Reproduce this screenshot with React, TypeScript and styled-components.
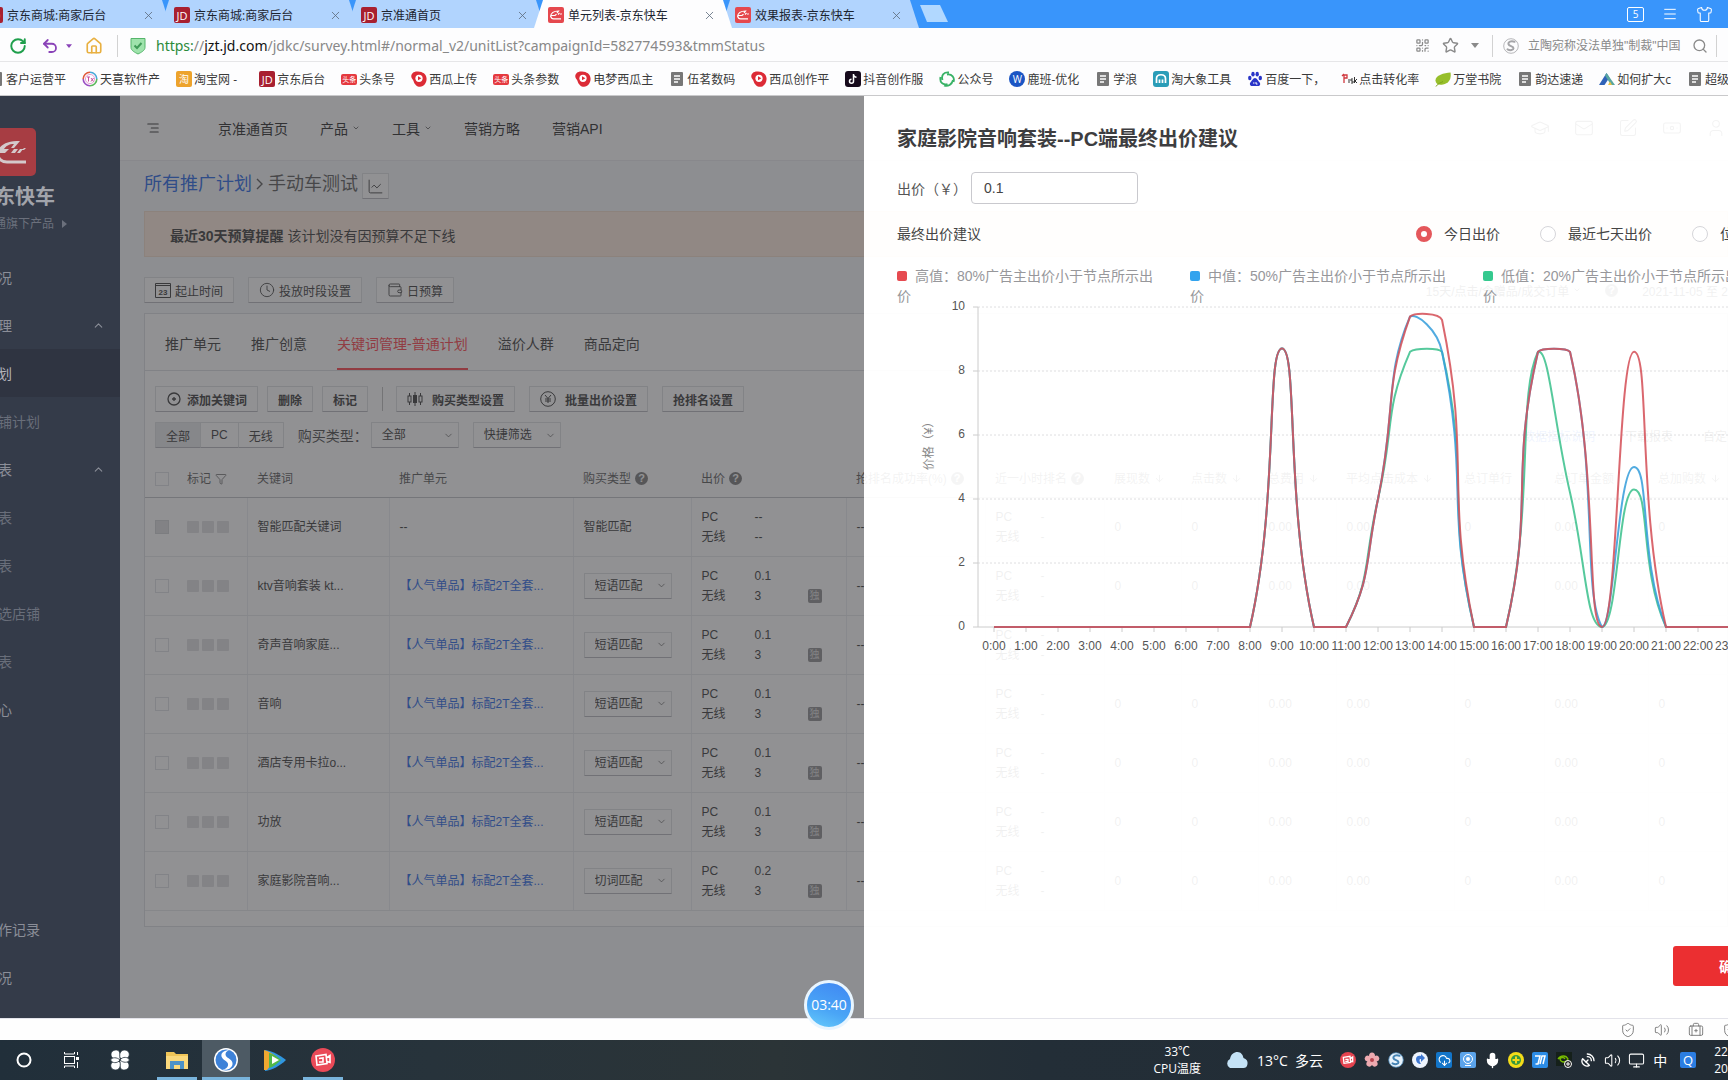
import React from "react";
import styled, { createGlobalStyle, css } from "styled-components";
import {
  AlignRight, ArrowDown, ChevronDown, ChevronUp, Clock, Filter, GraduationCap, House, LineChart, Mail, Menu, Mic,
  Monitor, QrCode, RotateCw, Search, Shirt, ShieldCheck, SquarePen, Star, Undo2, User, Volume2, Wallet, X, Banknote,
  BriefcaseMedical, CloudDownload, SatelliteDish,
} from "lucide-react";

const GlobalStyle = createGlobalStyle`
  * { box-sizing: border-box; }
  body { margin: 0; overflow: hidden; background: #fff; }
  body, button, input, select { font-family: "Liberation Sans", "Noto Sans CJK SC", sans-serif; }
  button { cursor: pointer; }
`;

const UI_FONT = '"Open Sans", "Noto Sans CJK SC", sans-serif';

/* ---------- browser chrome ---------- */

const Screen = styled.div`
  display: flex;
  flex-direction: column;
  min-height: 100vh;
  overflow: hidden;
  font-size: 12px;
  color: #333;
`;

const TabStrip = styled.div`
  display: flex;
  align-items: stretch;
  height: 28px;
  background: #3995fb;
  font-family: ${UI_FONT};
`;

const TabList = styled.div`
  display: flex;
  margin-left: -27px;
`;

const BrowserTab = styled.div<{ $active?: boolean }>`
  display: flex;
  align-items: center;
  gap: 4px;
  width: 198px;
  margin-right: -11px;
  padding: 2px 16px 0 14px;
  background: ${(p) => (p.$active ? "#fdfdfe" : "#b1d4fe")};
  clip-path: polygon(9px 0, calc(100% - 9px) 0, 100% 100%, 0 100%);
  color: #1c2430;
  white-space: nowrap;
  position: relative;
  z-index: ${(p) => (p.$active ? 1 : 0)};
`;

const CloseTab = styled.button`
  display: flex;
  margin-left: auto;
  padding: 0;
  border: 0;
  background: none;
  color: #5d6b7c;
`;

const NewTab = styled.button`
  width: 28px;
  height: 17px;
  margin: 5px 0 0 12px;
  border: 0;
  padding: 0;
  background: #b1d8ff;
  clip-path: polygon(0 0, 20px 0, 100% 100%, 7px 100%);
`;

const WindowTools = styled.div`
  display: flex;
  align-items: center;
  gap: 18px;
  margin-left: auto;
  padding-right: 15px;
  color: #fff;
`;

const SquareCount = styled.span`
  width: 17px;
  height: 15px;
  border: 1px solid #fff;
  border-radius: 2px;
  font-size: 10px;
  line-height: 13px;
  text-align: center;
`;

const AddressBar = styled.div`
  display: flex;
  align-items: center;
  height: 34px;
  padding: 2px 11px 0 2px;
  border-bottom: 1px solid #e6e6e8;
  background: #fdfdfe;
  color: #858585;
`;

const ToolButton = styled.button<{ $w: number; $c?: string }>`
  display: flex;
  align-items: center;
  justify-content: center;
  flex: 0 0 ${(p) => p.$w}px;
  padding: 0;
  border: 0;
  background: none;
  color: ${(p) => p.$c || "#8a8a8a"};
`;

const Divider = styled.span<{ $m: string; $h?: number; $c?: string }>`
  flex: 0 0 1px;
  height: ${(p) => p.$h || 22}px;
  margin: ${(p) => p.$m};
  background: ${(p) => p.$c || "#d2d2d2"};
`;

const Url = styled.div`
  flex: 1;
  padding-left: 10px;
  font-family: "Noto Sans", sans-serif;
  font-size: 14px;
  line-height: 20px;
  color: #888;
  white-space: nowrap;
  .scheme { color: #2b8a3a; }
  .host { color: #111; }
`;

const SearchBox = styled.input`
  width: 160px;
  margin-left: 9px;
  padding: 0;
  border: 0;
  background: none;
  font-size: 12px;
  &::placeholder { color: #8a8a8a; opacity: 1; }
`;

const Bookmarks = styled.nav`
  display: flex;
  align-items: center;
  gap: 16px;
  height: 34px;
  padding-top: 1px;
  border-bottom: 1px solid #c9c9cb;
  background: #fdfdfe;
  font-family: ${UI_FONT};
  overflow: hidden;
`;

const Bookmark = styled.a`
  display: flex;
  flex: none;
  align-items: center;
  gap: 2px;
  color: #3a3a3a;
  text-decoration: none;
  white-space: pre;
  &:first-child { margin-left: -12px; }
`;

const IconBadge = styled.span<{ $bg: string; $round?: boolean; $size?: number; $h?: number }>`
  display: inline-flex;
  align-items: center;
  justify-content: center;
  flex: 0 0 16px;
  height: ${(p) => p.$h || 16}px;
  border-radius: ${(p) => (p.$round ? "50%" : "2px")};
  background: ${(p) => p.$bg};
  color: #fff;
  font-size: ${(p) => p.$size || 10}px;
  line-height: 1;
  white-space: nowrap;
`;

/* ---------- page ---------- */

const Page = styled.div`
  display: flex;
  flex: 1;
  min-height: 0;
`;

const Sidebar = styled.aside`
  display: flex;
  flex-direction: column;
  flex: 0 0 120px;
  padding: 32px 0 17px;
  overflow: hidden;
  background: #343b49;
  color: #8b8e98;
`;

const Logo = styled.div`
  display: flex;
  align-items: center;
  width: 48px;
  height: 48px;
  margin-left: -12px;
  border-radius: 5px;
  background: #a73d43;
`;

const Brand = styled.div`
  margin: 9px 0 0 -5px;
  font-size: 20px;
  font-weight: 700;
  line-height: 24px;
  color: #a2a4ab;
  white-space: nowrap;
`;

const BrandSub = styled.a`
  display: flex;
  align-items: center;
  gap: 8px;
  margin: 7px 0 21px -6px;
  line-height: 16px;
  color: #6b707c;
  text-decoration: none;
  white-space: nowrap;
`;

const SideMenu = styled.nav<{ $bottom?: boolean }>`
  margin-top: ${(p) => (p.$bottom ? "auto" : 0)};
`;

const SideItem = styled.a<{ $tone?: "active" | "dim" }>`
  display: flex;
  align-items: center;
  justify-content: space-between;
  height: 48px;
  padding-right: 15px;
  font-size: 14px;
  text-decoration: none;
  text-indent: -2px;
  white-space: nowrap;
  color: ${(p) => (p.$tone === "active" ? "#b4b5bb" : p.$tone === "dim" ? "#696e7a" : "#8b8e98")};
  background: ${(p) => (p.$tone === "active" ? "#2f3441" : "transparent")};
`;

const Main = styled.div`
  position: relative;
  flex: 1;
  min-width: 0;
  overflow: hidden;
  background: #f5f8fa;
`;

const Header = styled.header`
  display: flex;
  align-items: center;
  height: 65px;
  padding-left: 26px;
  background: #fff;
  border-bottom: 1px solid #e9ebee;
`;

const TopNav = styled.nav`
  display: flex;
  align-items: center;
  gap: 32px;
  margin-left: 58px;
  font-size: 14px;
  a { display: flex; align-items: center; gap: 4px; color: #222; text-decoration: none; }
`;

const HeaderIcons = styled.div`
  display: flex;
  gap: 24px;
  margin: 0 2px 0 auto;
  color: #555;
`;

const Content = styled.div`
  padding-left: 24px;
`;

const Crumbs = styled.div`
  display: flex;
  align-items: flex-start;
  gap: 4px;
  height: 26px;
  margin: 12px 0;
  font-size: 18px;
  line-height: 22px;
  color: #555;
  a { color: #1c62e6; text-decoration: none; }
`;

const boxed = css`
  display: inline-flex;
  align-items: center;
  height: 26px;
  border: 1px solid #dcdee2;
  border-bottom-color: #b4b6bb;
  border-radius: 1px;
  background: #fff;
  color: #333;
  font-size: 12px;
  white-space: nowrap;
`;

const Button = styled.button<{ $bold?: boolean; $gap?: number }>`
  ${boxed}
  gap: ${(p) => p.$gap || 4}px;
  padding: 0 10px;
  font-weight: ${(p) => (p.$bold ? 700 : 400)};
`;

const ChartButton = styled(Button)`
  padding: 0 4px;
`;

const Notice = styled.div`
  height: 46px;
  padding-left: 25px;
  border: 1px solid #f3dcc9;
  background: #ffebdc;
  font-size: 14px;
  line-height: 48px;
`;

const Row = styled.div<{ $gap: number; $m: string }>`
  display: flex;
  align-items: center;
  gap: ${(p) => p.$gap}px;
  margin: ${(p) => p.$m};
`;

const RightTools = styled.div<{ $gap: number }>`
  display: flex;
  align-items: center;
  gap: ${(p) => p.$gap}px;
  margin-left: auto;
  white-space: nowrap;
  a { color: #1c62e6; text-decoration: none; }
`;

const Card = styled.section`
  padding-bottom: 15px;
  border: 1px solid #d9dce1;
  background: #fff;
`;

const CardTabs = styled.div`
  display: flex;
  gap: 30px;
  height: 57px;
  padding-left: 20px;
  border-bottom: 1px solid #d9dce1;
`;

const CardTab = styled.button<{ $on?: boolean }>`
  height: 56px;
  padding: 4px 0 0;
  border: 0;
  border-bottom: 2px solid ${(p) => (p.$on ? "#ff3a44" : "transparent")};
  background: none;
  color: ${(p) => (p.$on ? "#ff3a44" : "#333")};
  font-size: 14px;
`;

const Segments = styled.div`
  display: flex;
`;

const Segment = styled.button<{ $on?: boolean }>`
  ${boxed}
  padding: 0 10px;
  background: ${(p) => (p.$on ? "#e6e7ea" : "#fff")};
  & + & { margin-left: -1px; }
`;

const FieldLabel = styled.label`
  margin-right: -11px;
  font-size: 14px;
  color: #444;
`;

const SelectWrap = styled.span`
  display: inline-grid;
  width: 88px;
  align-items: center;
  select { ${boxed} grid-area: 1 / 1; width: 88px; padding: 0 10px; appearance: none; }
  svg { grid-area: 1 / 1; justify-self: end; margin-right: 5px; pointer-events: none; color: #555; }
`;

const Table = styled.table`
  width: 1700px;
  margin-top: 11px;
  border-collapse: collapse;
  table-layout: fixed;
  font-size: 12px;
  line-height: 20px;
  th { height: 38px; padding: 2px 10px 0; font-weight: 400; text-align: left; color: #555; white-space: nowrap; border-bottom: 1px solid #bfc1c6; }
  td { height: 59px; padding: 0 10px; border-bottom: 1px solid #e6e8eb; border-right: 1px solid #ebedf0; white-space: nowrap; }
  td:first-child { border-right: 0; }
  td a { color: #1c62e6; text-decoration: none; }
`;

const HeadLabel = styled.span`
  display: inline-flex;
  align-items: center;
  gap: 4px;
`;

const Help = styled.span`
  width: 13px;
  height: 13px;
  border-radius: 50%;
  background: #777;
  color: #fff;
  font-size: 11px;
  font-weight: 700;
  line-height: 13px;
  text-align: center;
`;

const Check = styled.input`
  display: block;
  width: 14px;
  height: 14px;
  margin: 0;
  appearance: none;
  border: 1px solid #dddfe3;
  background: #fff;
  &:disabled { background: #dcdcde; border-color: #cfd0d3; }
`;

const Marks = styled.span`
  display: flex;
  gap: 3px;
  i { width: 12px; height: 12px; border-radius: 1px; background: #dedee0; }
`;

const Bid = styled.div<{ $cols: string }>`
  display: grid;
  grid-template-columns: ${(p) => p.$cols};
  align-items: center;
`;

const Solo = styled.span`
  width: 14px;
  height: 14px;
  border-radius: 2px;
  background: #8c8c8e;
  color: #ddd;
  font-size: 10px;
  line-height: 14px;
  text-align: center;
`;

/* ---------- drawer ---------- */

const Overlay = styled.div`
  position: absolute;
  inset: 0;
  display: flex;
`;

const Mask = styled.div`
  flex: 1;
  background: rgba(62, 62, 65, 0.57);
`;

const Drawer = styled.section`
  display: flex;
  flex-direction: column;
  width: 50vw;
  padding: 29px 0 32px 33px;
  overflow: hidden;
  background: rgba(255, 255, 255, 0.93);
`;

const DrawerTitle = styled.h2`
  margin: 0 0 19px;
  font-size: 20px;
  line-height: 28px;
  color: #3d3d40;
`;

const BidField = styled.div`
  display: flex;
  align-items: center;
  margin-bottom: 18px;
  font-size: 14px;
  color: #555;
  label { width: 74px; white-space: nowrap; }
  input { width: 167px; height: 32px; padding: 0 12px; border: 1px solid #c9c9ce; border-radius: 4px; font-size: 14px; color: #444; background: #fff; }
`;

const Suggest = styled.div`
  display: flex;
  justify-content: space-between;
  height: 24px;
  margin-bottom: 20px;
  font-size: 14px;
  line-height: 24px;
  color: #444;
`;

const Radios = styled.div`
  display: flex;
  gap: 40px;
  margin-right: -6px;
  label { display: flex; align-items: center; gap: 12px; }
  input { width: 16px; height: 16px; margin: 0; appearance: none; border: 1px solid #d6d6da; border-radius: 50%; background: #fff; }
  input:checked { border: 5px solid #e4575b; }
`;

const Legend = styled.div`
  display: grid;
  grid-template-columns: repeat(3, 293px);
  font-size: 14px;
  line-height: 20px;
  color: #97979b;
  p { margin: 0; padding-right: 30px; }
`;

const Swatch = styled.i<{ $c: string }>`
  display: inline-block;
  width: 10px;
  height: 10px;
  margin-right: 8px;
  border-radius: 2px;
  background: ${(p) => p.$c};
`;

const ChartSvg = styled.svg`
  display: block;
  flex: none;
  overflow: visible;
`;

const Confirm = styled.button`
  align-self: flex-end;
  flex: none;
  width: 120px;
  height: 40px;
  margin: auto -65px 0 0;
  border: 0;
  border-radius: 3px;
  background: #eb2f31;
  color: #fff;
  font-size: 14px;
  font-weight: 700;
`;

const Timer = styled.div`
  position: absolute;
  bottom: -12px;
  left: 684px;
  width: 50px;
  height: 50px;
  border: 3px solid #e8f5ff;
  border-radius: 50%;
  background: linear-gradient(200deg, #3f86f2, #4aa5f6 60%, #66ccfb);
  color: #fff;
  font-family: ${UI_FONT};
  font-size: 14px;
  line-height: 44px;
  text-align: center;
`;

const MainFrame = styled.div`
  position: relative;
  display: flex;
  flex: 1;
  min-width: 0;
`;

/* ---------- bottom bars ---------- */

const StatusBar = styled.div`
  display: flex;
  justify-content: flex-end;
  align-items: center;
  gap: 18px;
  height: 22px;
  margin-right: -10px;
  border-top: 1px solid #e3e3ea;
  background: #fefefe;
  color: #777;
`;

const Taskbar = styled.footer`
  display: flex;
  height: 40px;
  overflow: hidden;
  background: linear-gradient(90deg, #212f3a, #27333b 25%, #2b3437 45%, #232e37 60%, #222c35);
  color: #fff;
  font-family: ${UI_FONT};
`;

const TaskGroup = styled.div`
  display: flex;
  margin-right: 9px;
`;

const Task = styled.button<{ $open?: boolean; $on?: boolean }>`
  display: flex;
  align-items: center;
  justify-content: center;
  width: ${(p) => (p.$on ? 48 : 40)}px;
  margin: 0 ${(p) => (p.$on ? 1 : 4)}px;
  padding: 3px 0 0;
  border: 0;
  border-bottom: 3px solid ${(p) => (p.$open || p.$on ? "#79b4dc" : "transparent")};
  background: ${(p) => (p.$on ? "#4d5a64" : "none")};
  background-clip: padding-box;
`;

const Tray = styled.div`
  display: flex;
  align-items: center;
  flex: none;
  margin: 0 -3px 0 auto;
`;

const Stack = styled.div<{ $ml: number }>`
  margin-left: ${(p) => p.$ml}px;
  line-height: 17px;
  text-align: center;
`;

const Weather = styled.div`
  display: flex;
  align-items: center;
  gap: 9px;
  margin: 0 13px 0 24px;
  font-size: 14px;
  white-space: nowrap;
`;

const TrayIcon = styled.span`
  display: flex;
  align-items: center;
  justify-content: center;
  width: 24px;
  font-size: 14px;
`;

/* ---------- drawings ---------- */

const CarMark = ({ size = 16 }: { size?: number }) => (
  <svg width={size} height={size} viewBox="0 0 16 16">
    <rect width="16" height="16" rx="2" fill="#e5484e" />
    <path d="M2.500 9.500C3 6 6 4 10.500 4L9 6M3 8.500h4l1.500-1.300M10 7.500l1.500-1.500M12.500 7.500l1-1M2.800 9.300c.3 1.900 1 2.500 2.800 2.500H13" stroke="#fff" strokeWidth="1.200" fill="none" />
  </svg>
);

const SidebarMark = () => (
  <svg width="48" height="48" viewBox="0 0 48 48" fill="none">
    <path d="M9 25C12 16 19 13 32 13l-6 7h-3l3-4c-5 0-8 2-10 5h5l-4 4z" fill="#d4c9cb" />
    <path d="M23 25l3-4h4l-3 4zM29 25l3-4h3l-3 4zM34 22l2-2h2l-2 2z" fill="#d4c9cb" />
    <path d="M9 23c1 8 4 11 10 11h19" stroke="#d4c9cb" strokeWidth="3" />
  </svg>
);

const Doc = () => (
  <svg width="16" height="16" viewBox="0 0 16 16">
    <rect x="2" y="1" width="12" height="14" rx="1" fill="#777" />
    <path d="M5 5h6M5 8h6M5 11h4" stroke="#fff" strokeWidth="1.3" />
  </svg>
);

const Melon = () => (
  <svg width="16" height="16" viewBox="0 0 16 16">
    <path d="M7 .5C2 0-.5 3.500.5 6.500 1 8 2 8.500 2.500 10 3.500 13.500 6 15.800 9 15.800 13.500 15.800 16 11 15.500 7 15 3 12 .8 7 .5z" fill="#dc2b36" />
    <circle cx="8" cy="7.300" r="3.600" fill="#fff" />
    <path d="M7 5.300l3.400 2-3.400 2z" fill="#dc2b36" />
  </svg>
);

const Swirl = ({ bg, fg, size = 16 }: { bg: string; fg: string; size?: number }) => (
  <svg width={size} height={size} viewBox="0 0 16 16">
    <circle cx="8" cy="8" r="7.300" fill={bg} stroke={fg} strokeWidth=".8" />
    <path d="M11.500 3.800C8 2.500 5 4 5.500 6.200 6 8.300 10.500 8 10.500 10.200c0 1.900-3.200 2.600-6 1.200" stroke={fg} strokeWidth="2" fill="none" strokeLinecap="round" />
  </svg>
);

const BlueSwirl = () => (
  <svg width="24" height="24" viewBox="0 0 24 24">
    <circle cx="12" cy="12" r="12" fill="#fff" />
    <circle cx="12" cy="12" r="10.500" fill="#3e82d8" />
    <path d="M16 2C9 2 6 6 8 9.500s7 4 6 8c-.5 2-2.500 4-6 4 6 1.500 11-2 10.500-6.500C18 10.500 11 10 11.500 6 11.700 4 13.500 2.500 16 2z" fill="#fff" />
  </svg>
);

const Paw = () => (
  <svg width="16" height="16" viewBox="0 0 16 16" fill="#2a35c8">
    <ellipse cx="2.800" cy="7" rx="1.700" ry="2.200" /><ellipse cx="6" cy="3.200" rx="1.700" ry="2.400" />
    <ellipse cx="10.200" cy="3.200" rx="1.700" ry="2.400" /><ellipse cx="13.300" cy="7" rx="1.700" ry="2.200" />
    <path d="M8 7c-2 0-3 3-4.500 4.200C2 13 3.500 15.500 5.500 15h5c2.500.4 3.500-2 2-3.800C11 10 10 7 8 7z" />
    <path d="M6 12h1.500M9 11v2h1.500" stroke="#fff" fill="none" />
  </svg>
);

const Leaf = () => (
  <svg width="16" height="16" viewBox="0 0 16 16">
    <path d="M15.500 1.500C9 2 .5 4 .5 9.500.5 13 4 14.500 8 13.500 14 12 16.500 8 15.500 1.500z" fill="#97bf2b" />
    <path d="M1 15.500C3 12 6 12 8 10.500" stroke="#7da31c" fill="none" />
  </svg>
);

const Peak = () => (
  <svg width="16" height="16" viewBox="0 0 16 16">
    <path d="M0 14L7.500 2l3 4.500L5.500 14z" fill="#2f62b8" /><path d="M7.500 2L16 14h-4L6 4.500z" fill="#58a6a0" />
    <path d="M9 14l2-3.500 2 3.500z" fill="#edc242" />
  </svg>
);

const Green = () => (
  <svg width="16" height="16" viewBox="0 0 16 16" fill="none" stroke="#38b266" strokeWidth="1.800">
    <path d="M10 1.500C5 1 2 4 3.500 9M1.500 6c-1 5 2 8.500 7 7M5 14.500c4 1.500 8-1 9-5.500M14.500 11C16 7 13 2.500 8 3.500" />
  </svg>
);

const Note = () => (
  <svg width="16" height="16" viewBox="0 0 16 16">
    <rect width="16" height="16" rx="3" fill="#170b1c" />
    <path d="M8.500 3v7.300a2 2 0 1 1-2-2M8.500 3.500c.3 1.800 1.500 2.700 3 2.800" stroke="#fff" strokeWidth="1.500" fill="none" />
  </svg>
);

const Ring = () => (
  <svg width="16" height="16" viewBox="0 0 16 16" fill="none" strokeWidth="1.600">
    <path d="M8 1.200A6.800 6.800 0 0 1 14.800 8" stroke="#49a7d8" /><path d="M14.800 8A6.800 6.800 0 0 1 8 14.800" stroke="#5cb85c" />
    <path d="M8 14.800A6.800 6.800 0 0 1 1.200 8" stroke="#9b4fc4" /><path d="M1.200 8A6.800 6.800 0 0 1 8 1.200" stroke="#e05a3a" />
    <circle cx="8" cy="8" r="4.600" stroke="#e9a0d4" strokeWidth="1" /><path d="M5 6h3M6.500 6v4.500M9 7l2.500 3.500M11.500 7L9 10.500" stroke="#c94fa0" strokeWidth="1" />
  </svg>
);

const Caret = () => (
  <svg width="8" height="5" viewBox="0 0 8 5"><path d="M0 0h8L4 5z" fill="currentColor" /></svg>
);

const Candles = () => (
  <svg width="16" height="16" viewBox="0 0 16 16" fill="none" stroke="#333">
    <path d="M2.500 2v3M2.500 11v3M8 1v3M8 12v3M13.500 2v3M13.500 11v3" /><rect x="1" y="5" width="3" height="6" />
    <rect x="6.500" y="4.500" width="3" height="7" fill="#333" /><rect x="12" y="5" width="3" height="6" />
  </svg>
);

const Yen = () => (
  <svg width="16" height="16" viewBox="0 0 16 16" fill="none" stroke="#333">
    <circle cx="8" cy="8" r="7.300" /><path d="M5 4l3 3.500L11 4M8 7.500V12M5 8h6M5 10h6" />
  </svg>
);

const Plus = () => (
  <svg width="16" height="16" viewBox="0 0 16 16" fill="none" stroke="#333" strokeWidth="1.300">
    <circle cx="8" cy="8" r="6" /><path d="M8 6v4M6 8h4" />
  </svg>
);

const DateIcon = () => (
  <svg width="16" height="16" viewBox="0 0 16 16">
    <path d="M.5 1.500h15v14H.5zM.5 3.500h15" fill="none" stroke="#333" />
    <text x="8" y="12.500" fontSize="8" fontWeight="700" textAnchor="middle" fill="#333">23</text>
  </svg>
);

/* ---------- chart ---------- */

const STEP = 32;
const X0 = 97;
const Y0 = 321;
const UNIT = 32;

const base = [0, 0, 0, 0, 0, 0, 0, 0, 0, 8.7, 0, 0, 4];
const SERIES = [
  { color: "#3fc28e", data: [...base, 8.6, 8.6, 0, 0, 8.6, 4.2, 0, 4.3, 0, 0, 0] },
  { color: "#399fdc", data: [...base, 9.7, 8.6, 0, 0, 8.6, 8.6, 0, 5, 0, 0, 0] },
  { color: "#d5525a", data: [...base, 9.7, 9.6, 0, 0, 8.6, 8.6, 0, 8.6, 0, 0, 0] },
];

function smoothPath(data: number[]) {
  const pts = data.map((v, i) => [X0 + i * STEP, Y0 - v * UNIT]);
  const clamp = (y: number, a: number, b: number) =>
    Math.min(Y0, Math.max(Math.min(a, b) - 4, Math.min(Math.max(a, b), y)));
  const handle = (i: number, dir: 1 | -1) => {
    const p = pts[i];
    const prev = pts[Math.max(0, i - 1)];
    const next = pts[Math.min(pts.length - 1, i + 1)];
    const d0 = Math.hypot(p[0] - prev[0], p[1] - prev[1]);
    const d1 = Math.hypot(next[0] - p[0], next[1] - p[1]);
    const ratio = (dir === 1 ? d1 : d0) / (d0 + d1);
    const other = dir === 1 ? next : prev;
    return [
      p[0] + dir * (next[0] - prev[0]) * 0.5 * ratio,
      clamp(p[1] + dir * (next[1] - prev[1]) * 0.5 * ratio, p[1], other[1]),
    ];
  };
  return pts.slice(1).reduce((d, p, k) => {
    const a = handle(k, 1);
    const b = handle(k + 1, -1);
    return `${d}C${a[0]} ${a[1]} ${b[0]} ${b[1]} ${p[0]} ${p[1]}`;
  }, `M${pts[0][0]} ${pts[0][1]}`);
}

const PriceChart = () => (
  <ChartSvg width="880" height="350" fontFamily="Liberation Sans, Noto Sans CJK SC, sans-serif" fontSize="12" fill="#555">
    {[0, 2, 4, 6, 8, 10].map((v) => {
      const y = Y0 - v * UNIT;
      return (
        <g key={v}>
          <path d={`M76 ${y}h5`} stroke="#ccc" />
          <path d={`M81 ${y}H880`} stroke={v ? "#dedee0" : "#ccc"} strokeDasharray={v ? "2 2" : undefined} />
          <text x="68" y={y + 3} textAnchor="end">{v}</text>
        </g>
      );
    })}
    <path d={`M81 1V${Y0}`} stroke="#ccc" />
    {SERIES[0].data.map((_, i) => (
      <g key={i}>
        <path d={`M${X0 + i * STEP} ${Y0}v5`} stroke="#ccc" />
        <text x={X0 + i * STEP} y="344" textAnchor="middle">{i}:00</text>
      </g>
    ))}
    <text transform="translate(36 137) rotate(-90)" textAnchor="middle" fill="#888">价格（¥）</text>
    {SERIES.map((s) => (
      <path key={s.color} d={smoothPath(s.data)} stroke={s.color} strokeWidth="2" fill="none" opacity=".88" />
    ))}
  </ChartSvg>
);

/* ---------- data ---------- */

const JD = <IconBadge $bg="#a82030" $size={11}>JD</IconBadge>;
const Toutiao = <IconBadge $bg="#e5393f" $size={7} $h={11}>头条</IconBadge>;

const TABS = [
  { icon: JD, title: "京东商城:商家后台" },
  { icon: JD, title: "京东商城:商家后台" },
  { icon: JD, title: "京准通首页" },
  { icon: <CarMark />, title: "单元列表-京东快车", active: true },
  { icon: <CarMark />, title: "效果报表-京东快车" },
];

const BOOKMARKS: [React.ReactNode, string][] = [
  [<Doc />, "客户运营平"],
  [<Ring />, "天喜软件产"],
  [<IconBadge $bg="#eda32c">淘</IconBadge>, "淘宝网 -  "],
  [JD, "京东后台"],
  [Toutiao, "头条号"],
  [<Melon />, "西瓜上传"],
  [Toutiao, "头条参数"],
  [<Melon />, "电梦西瓜主"],
  [<Doc />, "伍茗数码"],
  [<Melon />, "西瓜创作平"],
  [<Note />, "抖音创作服"],
  [<Green />, "公众号"],
  [<IconBadge $bg="#1b55c4" $round>W</IconBadge>, "鹿班-优化"],
  [<Doc />, "学浪"],
  [<svg width="16" height="16" viewBox="0 0 16 16"><rect width="16" height="16" rx="3" fill="#2a9db8" /><path d="M3.500 12V7.500c0-5 9-5 9 0V12M6.500 12V8.500M9.500 12V8.500" stroke="#fff" strokeWidth="1.700" fill="none" /></svg>, "淘大象工具"],
  [<Paw />, "百度一下，"],
  [<svg width="16" height="16" viewBox="0 0 16 16" fill="none"><path d="M3 12V4h3v3H3M1 5l2-2" stroke="#d0393f" strokeWidth="1.300" /><path d="M8 8v4M12 8h-2v2h2v2h-2M13.500 6v6M16 8l-2 2 2 2" stroke="#333" /></svg>, "点击转化率"],
  [<Leaf />, "万堂书院"],
  [<Doc />, "韵达速递"],
  [<Peak />, "如何扩大c"],
  [<Doc />, "超级"],
];

type MenuEntry = { text: string; tone?: "active" | "dim"; open?: boolean };
const MENU: MenuEntry[] = [
  { text: "况" },
  { text: "理", open: true },
  { text: "划", tone: "active" },
  { text: "铺计划", tone: "dim" },
  { text: "表", open: true },
  { text: "表", tone: "dim" },
  { text: "表", tone: "dim" },
  { text: "选店铺", tone: "dim" },
  { text: "表", tone: "dim" },
  { text: "心" },
];

const WIDTHS = [32, 70, 142, 184, 118, 155, 139, 119, 77, 77, 78, 118, 90, 104, 197];
const HEADS: { text: string; help?: boolean; sort?: boolean }[] = [
  { text: "关键词" },
  { text: "推广单元" },
  { text: "购买类型", help: true },
  { text: "出价", help: true },
  { text: "抢排名成功率(%)", help: true },
  { text: "近一小时排名", help: true },
  { text: "展现数", sort: true },
  { text: "点击数", sort: true },
  { text: "总费用", sort: true },
  { text: "平均点击成本", sort: true },
  { text: "总订单行" },
  { text: "总订单金额" },
  { text: "总加购数", sort: true },
];

const UNIT_NAME = "【人气单品】标配2T全套...";
const FULL = ["0", "0", "0.00", "0.00", "0", "0.00", "0"];
const ROWS = [
  { word: "智能匹配关键词", match: "", pc: "--", mobile: "--", stats: FULL },
  { word: "ktv音响套装 kt...", match: "短语匹配", pc: "0.1", mobile: "3", stats: ["0", "0", "0.00", "0.00", "", "0.00", ""] },
  { word: "奇声音响家庭...", match: "短语匹配", pc: "0.1", mobile: "3", stats: ["", "", "", "", "", "", ""] },
  { word: "音响", match: "短语匹配", pc: "0.1", mobile: "3", stats: FULL },
  { word: "酒店专用卡拉o...", match: "短语匹配", pc: "0.1", mobile: "3", stats: FULL },
  { word: "功放", match: "短语匹配", pc: "0.1", mobile: "3", stats: FULL },
  { word: "家庭影院音响...", match: "切词匹配", pc: "0.2", mobile: "3", stats: FULL },
];

const LEGEND = [
  { color: "#e64a50", text: "高值：80%广告主出价小于节点所示出价" },
  { color: "#32a3ee", text: "中值：50%广告主出价小于节点所示出价" },
  { color: "#35c98f", text: "低值：20%广告主出价小于节点所示出价" },
];

function Dropdown({ id, value, label }: { id?: string; value: string; label?: string }) {
  return (
    <SelectWrap>
      <select id={id} aria-label={label} defaultValue={value}>
        <option>{value}</option>
      </select>
      <ChevronDown size={11} strokeWidth={1.6} />
    </SelectWrap>
  );
}

function KeywordTable() {
  return (
    <Table>
      <colgroup>{WIDTHS.map((w, i) => <col key={i} width={w} />)}</colgroup>
      <thead>
        <tr>
          <th><Check type="checkbox" aria-label="全选" /></th>
          <th><HeadLabel>标记<Filter size={12} strokeWidth={1.5} /></HeadLabel></th>
          {HEADS.map((h) => (
            <th key={h.text}><HeadLabel>{h.text}{h.help && <Help>?</Help>}{h.sort && <ArrowDown size={11} />}</HeadLabel></th>
          ))}
        </tr>
      </thead>
      <tbody>
        {ROWS.map((r) => (
          <tr key={r.word}>
            <td><Check type="checkbox" aria-label={r.word} disabled={!r.match} /></td>
            <td><Marks><i /><i /><i /></Marks></td>
            <td>{r.word}</td>
            <td>{r.match ? <a href="#unit">{UNIT_NAME}</a> : "--"}</td>
            <td>{r.match ? <Dropdown value={r.match} label="购买类型" /> : "智能匹配"}</td>
            <td>
              <Bid $cols="53px 53px auto"><span>PC</span><span>{r.pc}</span><span /><span>无线</span><span>{r.mobile}</span>{r.match ? <Solo>独</Solo> : <span />}</Bid>
            </td>
            <td>--</td>
            <td><Bid $cols="45px auto"><span>PC</span><span>-</span><span>无线</span><span>-</span></Bid></td>
            {r.stats.map((s, i) => <td key={i}>{s}</td>)}
          </tr>
        ))}
      </tbody>
    </Table>
  );
}

function BidDrawer() {
  return (
    <Drawer aria-label="出价建议">
      <DrawerTitle>家庭影院音响套装--PC端最终出价建议</DrawerTitle>
      <BidField>
        <label htmlFor="bid">出价（￥）</label>
        <input id="bid" defaultValue="0.1" />
      </BidField>
      <Suggest>
        <span>最终出价建议</span>
        <Radios>
          <label><input type="radio" name="range" defaultChecked />今日出价</label>
          <label><input type="radio" name="range" />最近七天出价</label>
          <label><input type="radio" name="range" />位</label>
        </Radios>
      </Suggest>
      <Legend>
        {LEGEND.map((l) => <p key={l.color}><Swatch $c={l.color} />{l.text}</p>)}
      </Legend>
      <PriceChart />
      <Confirm>确定</Confirm>
    </Drawer>
  );
}

export default function App() {
  return (
    <Screen>
      <GlobalStyle />
      <TabStrip>
        <TabList>
          {TABS.map((t, i) => (
            <BrowserTab key={i} $active={t.active}>
              {t.icon}<span>{t.title}</span>
              <CloseTab aria-label="关闭"><X size={13} strokeWidth={1.5} /></CloseTab>
            </BrowserTab>
          ))}
        </TabList>
        <NewTab aria-label="新标签页" />
        <WindowTools><SquareCount>5</SquareCount><Menu size={16} strokeWidth={1.5} /><Shirt size={17} strokeWidth={1.5} /></WindowTools>
      </TabStrip>
      <AddressBar>
        <ToolButton $w={32} $c="#1f9f4c" aria-label="刷新"><RotateCw size={18} strokeWidth={2.6} /></ToolButton>
        <ToolButton $w={32} $c="#8a43b8" aria-label="后退"><Undo2 size={18} strokeWidth={2.4} /></ToolButton>
        <ToolButton $w={4} $c="#8a43b8" aria-label="历史"><svg width="6" height="4" viewBox="0 0 8 5"><path d="M0 0h8L4 5z" fill="currentColor" /></svg></ToolButton>
        <ToolButton $w={44} $c="#e8b041" aria-label="主页"><House size={18} strokeWidth={2.2} /></ToolButton>
        <Divider $m="0 12px 0 1px" />
        <svg width="16" height="18" viewBox="0 0 16 18"><path d="M1 1.500h14v9c0 3-4 5-7 6.500-3-1.500-7-3.500-7-6.500z" fill="#9fe3ac" stroke="#55b56b" /><path d="M4.500 8.500l2.500 2.500 4.500-5" stroke="#3f9b57" strokeWidth="2" fill="none" /></svg>
        <Url role="textbox" aria-label="地址"><span className="scheme">https:</span>//<span className="host">jzt.jd.com</span>/jdkc/survey.html#/normal_v2/unitList?campaignId=582774593&amp;tmmStatus</Url>
        <ToolButton $w={28} aria-label="二维码"><QrCode size={15} /></ToolButton>
        <ToolButton $w={28} aria-label="收藏"><Star size={17} /></ToolButton>
        <ToolButton $w={22} aria-label="更多"><Caret /></ToolButton>
        <Divider $m="0 10px 0 6px" />
        <Swirl bg="#fdfdfe" fg="#a5a5a8" />
        <SearchBox aria-label="搜索" placeholder={'立陶宛称没法单独"制裁"中国'} />
        <ToolButton $w={24} aria-label="搜索"><Search size={16} /></ToolButton>
        <Divider $m="0 0 0 4px" />
      </AddressBar>
      <Bookmarks>
        {BOOKMARKS.map(([icon, text]) => <Bookmark key={text} href="#bookmark">{icon}{text}</Bookmark>)}
      </Bookmarks>
      <Page>
        <Sidebar>
          <Logo><SidebarMark /></Logo>
          <Brand>东快车</Brand>
          <BrandSub href="#products">通旗下产品<svg width="5" height="8" viewBox="0 0 5 8"><path d="M0 0l5 4-5 4z" fill="currentColor" /></svg></BrandSub>
          <SideMenu>
            {MENU.map((m, i) => (
              <SideItem key={i} href="#menu" $tone={m.tone}>{m.text}{m.open && <ChevronUp size={13} />}</SideItem>
            ))}
          </SideMenu>
          <SideMenu $bottom>
            <SideItem href="#log">作记录</SideItem>
            <SideItem href="#status">况</SideItem>
          </SideMenu>
        </Sidebar>
        <MainFrame>
          <Main>
            <Header>
              <AlignRight size={14} strokeWidth={1.8} />
              <TopNav>
                <a href="#home">京准通首页</a>
                <a href="#product">产品<ChevronDown size={8} /></a>
                <a href="#tools">工具<ChevronDown size={8} /></a>
                <a href="#plan">营销方略</a>
                <a href="#api">营销API</a>
              </TopNav>
              <HeaderIcons>
                <GraduationCap size={20} strokeWidth={1.3} /><Mail size={20} strokeWidth={1.3} /><SquarePen size={20} strokeWidth={1.3} />
                <Banknote size={20} strokeWidth={1.3} /><User size={20} strokeWidth={1.3} />
              </HeaderIcons>
            </Header>
            <Content>
              <Crumbs>
                <a href="#all">所有推广计划</a>
                <svg width="8" height="22" viewBox="0 0 8 22"><path d="M1 6l5 5-5 5" stroke="#555" strokeWidth="1.400" fill="none" /></svg>
                <span>手动车测试</span>
                <ChartButton aria-label="趋势"><LineChart size={17} strokeWidth={1.3} /></ChartButton>
              </Crumbs>
              <Notice><b>最近30天预算提醒</b> 该计划没有因预算不足下线</Notice>
              <Row $gap={14} $m="20px 0 10px">
                <Button><DateIcon />起止时间</Button>
                <Button><Clock size={16} strokeWidth={1.3} />投放时段设置</Button>
                <Button><Wallet size={16} strokeWidth={1.3} />日预算</Button>
                <RightTools $gap={24}>
                  <HeadLabel>15天/点击/含赠品/成交订单<ChevronDown size={8} /></HeadLabel><Help>?</Help><span>2021-11-05 至 2</span>
                </RightTools>
              </Row>
              <Card>
                <CardTabs>
                  <CardTab>推广单元</CardTab>
                  <CardTab>推广创意</CardTab>
                  <CardTab $on>关键词管理-普通计划</CardTab>
                  <CardTab>溢价人群</CardTab>
                  <CardTab>商品定向</CardTab>
                </CardTabs>
                <Row $gap={9} $m="15px 0 10px 10px">
                  <Button $bold $gap={5}><Plus />添加关键词</Button>
                  <Button $bold>删除</Button>
                  <Button $bold>标记</Button>
                  <Divider $m="0 4px 0 5px" $h={24} $c="#bbb" />
                  <Row $gap={14} $m="0">
                    <Button $bold $gap={9}><Candles />购买类型设置</Button>
                    <Button $bold $gap={9}><Yen />批量出价设置</Button>
                    <Button $bold>抢排名设置</Button>
                  </Row>
                </Row>
                <Row $gap={14} $m="0 0 0 10px">
                  <Segments><Segment $on>全部</Segment><Segment>PC</Segment><Segment>无线</Segment></Segments>
                  <FieldLabel htmlFor="buy">购买类型：</FieldLabel>
                  <Dropdown id="buy" value="全部" />
                  <Dropdown value="快捷筛选" label="快捷筛选" />
                  <RightTools $gap={30}><a href="#metrics">数据指标说明</a><span>下载报表</span><span>自定</span></RightTools>
                </Row>
                <KeywordTable />
              </Card>
            </Content>
            <Overlay><Mask /><BidDrawer /></Overlay>
          </Main>
          <Timer>03:40</Timer>
        </MainFrame>
      </Page>
      <StatusBar>
        <ShieldCheck size={16} strokeWidth={1.4} /><Volume2 size={16} strokeWidth={1.4} /><BriefcaseMedical size={16} strokeWidth={1.4} /><ShieldCheck size={16} strokeWidth={1.4} />
      </StatusBar>
      <Taskbar>
        <TaskGroup>
          <Task aria-label="搜索"><svg width="18" height="18" viewBox="0 0 18 18"><circle cx="9" cy="9" r="6.500" fill="none" stroke="#fff" strokeWidth="2" /></svg></Task>
          <Task aria-label="任务视图"><svg width="18" height="18" viewBox="0 0 18 18" fill="none" stroke="#fff"><path d="M1.500 1v2h10V1M1.500 17v-2h10v2M14.500 1v3M14.500 11v6" /><rect x="1.500" y="5.500" width="10" height="7" /><path d="M14.500 6v3" strokeWidth="3" /></svg></Task>
          <Task aria-label="助手"><svg width="22" height="22" viewBox="0 0 22 22" fill="#fff" stroke="#24313b" strokeWidth=".8"><path d="M11 11C5 11 2 9 2 5.500S5 1 7.500 1 12 4 11 11z" /><path d="M11 11c6 0 9 2 9 5.500S17 21 14.500 21 10 18 11 11z" /><path d="M11 9C10 4 12 1 15.500 1S21 4 20 7s-5 3.500-9 2z" /><path d="M11 13c1 5-1 8-4.500 8S1 18 2 15s5-3.500 9-2z" /><path d="M11 11c3-4 8-3 9.500 0-1.500 3-6.500 3-9.500 0zM11 11c-3-3-8-3-9.500 0 1.500 3 6.500 4 9.500 0z" /></svg></Task>
        </TaskGroup>
        <Task as="button" $open aria-label="文件"><svg width="22" height="20" viewBox="0 0 22 20"><path d="M0 2h8l2 2h12v15H0z" fill="#f0c558" /><path d="M0 6h22v13H0z" fill="#fbd97c" /><path d="M4 19v-8h14v8h-4v-4H8v4z" fill="#4d92c8" /></svg></Task>
        <Task $on aria-label="浏览器"><BlueSwirl /></Task>
        <Task aria-label="视频"><svg width="24" height="24" viewBox="0 0 24 24"><path d="M2 2c7 1 15 5 21 10-6 6-14 10-21 11z" fill="#3096e0" /><path d="M1 2c4 1 9 4 13 7L4 22H1z" fill="#f0a830" /><path d="M6 5c4 1 9 4 12 7-4 4-8 7-12 8z" fill="#53b848" /><path d="M9 8l7 4-7 4z" fill="#fff" /></svg></Task>
        <Task $open aria-label="录屏"><svg width="24" height="24" viewBox="0 0 24 24"><circle cx="12" cy="12" r="12" fill="#ea4a58" /><path d="M5 8l10-1.500 1 9L6 17zM16 9.500l3-2v7l-3-1" stroke="#fff" strokeWidth="1.600" fill="none" /><path d="M8 10.500l4-.5v4H8" stroke="#fff" strokeWidth="1.600" fill="none" /></svg></Task>
        <Tray>
          <Stack $ml={0}>33℃<br />CPU温度</Stack>
          <Weather>
            <svg width="23" height="18" viewBox="0 0 23 18"><path d="M5 17a5 5 0 0 1 0-9C6 3 9 1 12.500 1S18 4 18.500 7c3 1 4.500 3 4 6s-2 4-4 4z" fill="#c4e2f6" /></svg>
            <span>13°C&nbsp; 多云</span>
          </Weather>
          <TrayIcon><svg width="16" height="16" viewBox="0 0 24 24"><circle cx="12" cy="12" r="12" fill="#e4434f" /><path d="M5 8l10-1.500 1 9L6 17zM16 9.500l3-2v7l-3-1M8 11h4v3H8" stroke="#fff" strokeWidth="2" fill="none" /></svg></TrayIcon>
          <TrayIcon><svg width="16" height="16" viewBox="0 0 16 16" fill="#eeaab0">{[0, 72, 144, 216, 288].map((a) => <ellipse key={a} cx="8" cy="4" rx="3" ry="3.500" transform={`rotate(${a} 8 8)`} />)}<circle cx="8" cy="8" r="2" fill="#b8444e" /></svg></TrayIcon>
          <TrayIcon><Swirl bg="#e9f3fb" fg="#4785b5" /></TrayIcon>
          <TrayIcon><svg width="16" height="16" viewBox="0 0 16 16"><circle cx="8" cy="8" r="8" fill="#eef4fd" /><path d="M4 7c0-3 3-4 5-3v-2l4 4-4 4V7c-2 0-2 2 0 5-3 0-5-2-5-5z" fill="#3e77d0" /></svg></TrayIcon>
          <TrayIcon><IconBadge $bg="#1275c9"><CloudDownload size={13} /></IconBadge></TrayIcon>
          <TrayIcon><svg width="16" height="16" viewBox="0 0 16 16"><rect width="16" height="16" rx="2" fill="#5ba3ea" /><circle cx="8" cy="7" r="4.500" fill="none" stroke="#fff" /><circle cx="8" cy="7" r="2" fill="#fff" /><path d="M5 13.500h6" stroke="#fff" /></svg></TrayIcon>
          <TrayIcon><Mic size={17} fill="#fff" /></TrayIcon>
          <TrayIcon><svg width="16" height="16" viewBox="0 0 16 16"><circle cx="8" cy="8" r="8" fill="#f3dc19" /><circle cx="8" cy="8" r="5" fill="#37983f" /><path d="M8 4.500v7M4.500 8h7" stroke="#f3dc19" strokeWidth="2" /></svg></TrayIcon>
          <TrayIcon><svg width="16" height="16" viewBox="0 0 16 16"><rect width="16" height="16" rx="2" fill="#2c8ce6" /><path d="M3 4h5L6 12H3.500M8 12l2-8h3l-2 8" stroke="#fff" strokeWidth="1.500" fill="none" /></svg></TrayIcon>
          <TrayIcon><svg width="16" height="16" viewBox="0 0 16 16"><rect width="16" height="14" fill="#15201a" /><path d="M2 7c3-4 8-4 10 0-2 4-7 4-8 0 1-2 4-2 5 0" stroke="#76b900" fill="none" strokeWidth="1.300" /><circle cx="12" cy="12" r="3.500" fill="#222" stroke="#fff" /><path d="M12 10v4M10 12h4" stroke="#fff" /></svg></TrayIcon>
          <TrayIcon><SatelliteDish size={16} /></TrayIcon>
          <TrayIcon><Volume2 size={17} strokeWidth={1.5} /></TrayIcon>
          <TrayIcon><Monitor size={17} strokeWidth={1.5} /></TrayIcon>
          <TrayIcon>中</TrayIcon>
          <Stack $ml={4}><TrayIcon><IconBadge $bg="#2b7de1" $size={13}>Q</IconBadge></TrayIcon></Stack>
          <Stack $ml={14}>22:<br />20.</Stack>
        </Tray>
      </Taskbar>
    </Screen>
  );
}
